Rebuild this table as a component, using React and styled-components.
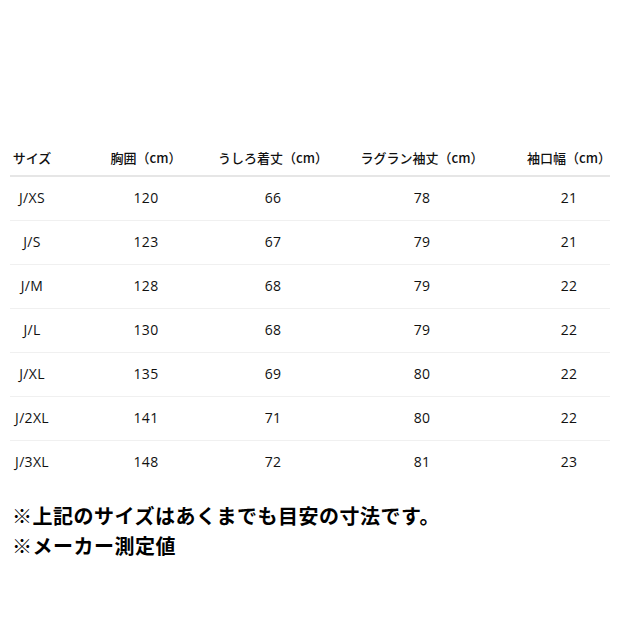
import styled, { createGlobalStyle } from "styled-components"

const GlobalStyle = createGlobalStyle`
    body {
        margin : 0;
        background : #fff;
        font-family : "Open Sans", "Noto Sans CJK JP", sans-serif;
        color : #111;
    }
`

const columns = "44px 184px 70px 228px 66px"

const headers = ["サイズ", "胸囲（cm）", "うしろ着丈（cm）", "ラグラン袖丈（cm）", "袖口幅（cm）"]

const rows = [
    ["J/XS", 120, 66, 78, 21],
    ["J/S", 123, 67, 79, 21],
    ["J/M", 128, 68, 79, 22],
    ["J/L", 130, 68, 79, 22],
    ["J/XL", 135, 69, 80, 22],
    ["J/2XL", 141, 71, 80, 22],
    ["J/3XL", 148, 72, 81, 23],
]

const App = () => {
    return (
        <>
            <GlobalStyle />
            <Page>
                <Table>
                    <HeadRow>
                        {headers.map((h) => (
                            <Cell key={h} head>{h}</Cell>
                        ))}
                    </HeadRow>
                    {rows.map((r, i) => (
                        <Row key={r[0]} last={i === rows.length - 1}>
                            {r.map((v, j) => (
                                <Cell key={j}>{v}</Cell>
                            ))}
                        </Row>
                    ))}
                </Table>
                <Notes>
                    <Note>※上記のサイズはあくまでも目安の寸法です。</Note>
                    <Note>※メーカー測定値</Note>
                </Notes>
            </Page>
        </>
    )
}

export default App

const Page = styled.div`
    width : 620px;
    height : 620px;
    padding : 140px 10px 0;
    box-sizing : border-box;
`
const Table = styled.div`
    display : flex;
    flex-direction : column;
`
const HeadRow = styled.div`
    display : grid;
    grid-template-columns : ${columns};
    padding-right : 8px;
    height : 35px;
    align-items : center;
    border-bottom : 2px solid #e6e6e6;
`
const Row = styled.div`
    display : grid;
    grid-template-columns : ${columns};
    padding-right : 8px;
    height : 44px;
    align-items : center;
    padding-bottom : 2px;
    box-sizing : border-box;
    border-bottom : 1px solid ${(p) => (p.last ? "transparent" : "#f0f0f0")};
`
const Cell = styled.div`
    display : flex;
    justify-content : center;
    white-space : nowrap;
    font-size : ${(p) => (p.head ? "13px" : "14px")};
    font-weight : 500;
    letter-spacing : ${(p) => (p.head ? "0" : "0.3px")};
    font-family : ${(p) => (p.head ? '"Noto Sans CJK JP", sans-serif' : '"Open Sans", "Noto Sans CJK JP", sans-serif')};
`
const Notes = styled.div`
    margin-top : 16px;
    padding-left : 2px;
`
const Note = styled.div`
    font-family : "Noto Sans CJK JP", sans-serif;
    font-weight : 700;
    font-size : 20px;
    letter-spacing : 0.5px;
    line-height : 30px;
    color : #000;
`
